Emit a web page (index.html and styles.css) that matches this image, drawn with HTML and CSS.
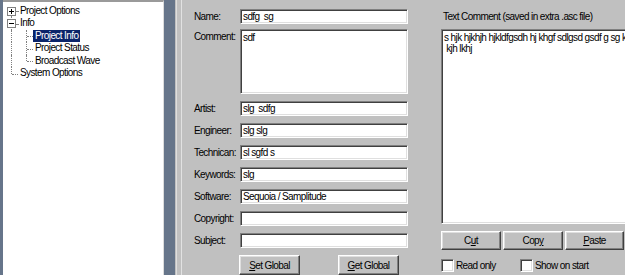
FILE: index.html
```html
<!DOCTYPE html>
<html>
<head>
<meta charset="utf-8">
<title>Project Info</title>
<link rel="stylesheet" href="styles.css">
</head>
<body>
<div class="app">
  <div class="edge"></div>
  <div class="tree">
    <div class="row"><span class="c bx down"><span class="box plus"></span></span><span class="lbl">Project Options</span></div>
    <div class="row"><span class="c bx both"><span class="box minus"></span></span><span class="lbl">Info</span></div>
    <div class="row"><span class="c v"></span><span class="c t"></span><span class="lbl sel">Project Info</span></div>
    <div class="row"><span class="c v"></span><span class="c t"></span><span class="lbl">Project Status</span></div>
    <div class="row"><span class="c v"></span><span class="c l"></span><span class="lbl">Broadcast Wave</span></div>
    <div class="row"><span class="c l"></span><span class="lbl">System Options</span></div>
  </div>
  <div class="splitter"></div>
  <div class="main">
    <div class="main-inner">
      <div class="content">
        <div class="form">
          <div class="frow"><span class="flabel">Name:</span><div class="field">sdfg&nbsp; sg</div></div>
          <div class="frow top comment"><span class="flabel">Comment:</span><div class="field area">sdf</div></div>
          <div class="frow"><span class="flabel">Artist:</span><div class="field">slg&nbsp; sdfg</div></div>
          <div class="frow"><span class="flabel">Engineer:</span><div class="field">slg slg</div></div>
          <div class="frow"><span class="flabel">Technican:</span><div class="field">sl sgfd s</div></div>
          <div class="frow"><span class="flabel">Keywords:</span><div class="field">slg</div></div>
          <div class="frow"><span class="flabel">Software:</span><div class="field">Sequoia / Samplitude</div></div>
          <div class="frow"><span class="flabel">Copyright:</span><div class="field"></div></div>
          <div class="frow"><span class="flabel">Subject:</span><div class="field"></div></div>
          <div class="frow btns"><div class="btn gbtn"><u>S</u>et Global</div><div class="btn gbtn"><u>G</u>et Global</div></div>
        </div>
        <div class="side">
          <div class="tc-label">Text Comment (saved in extra .asc file)</div>
          <div class="field tarea">s hjk hjkhjh hjkldfgsdh hj khgf sdlgsd gsdf g sg kjh
 kjh lkhj</div>
          <div class="cbtns">
            <div class="btn">C<u>u</u>t</div>
            <div class="btn">Cop<u>y</u></div>
            <div class="btn"><u>P</u>aste</div>
          </div>
          <div class="checks">
            <div class="chk"><span class="cb"></span>Read only</div>
            <div class="chk"><span class="cb"></span>Show on start</div>
          </div>
        </div>
      </div>
    </div>
  </div>
</div>
</body>
</html>
```

FILE: styles.css
```css
* { box-sizing: border-box; }
html, body { margin: 0; padding: 0; }
body {
  width: 625px;
  height: 275px;
  overflow: hidden;
  background: #66758a;
  font-family: "Liberation Sans", Arial, sans-serif;
  font-size: 10px;
  letter-spacing: -0.6px;
  color: #000;
}
.app { display: flex; height: 275px; }
.edge { width: 3px; flex: none; }

/* tree */
.tree {
  width: 161px;
  flex: none;
  background: #fff;
  border-top: 2px solid #9a9a9a;
  border-right: 1px solid #dcdcdc;
  padding-top: 2.8px;
}
.row { display: flex; height: 12.5px; white-space: nowrap; }
.c { width: 15px; flex: none; position: relative; display: flex; align-items: center; }
.c::before, .c::after { content: ""; position: absolute; }
.v::before, .t::before, .bx.both::before { left: 8px; top: 0; bottom: 0; border-left: 1px dotted #808080; }
.l::before { left: 8px; top: 0; height: 50%; border-left: 1px dotted #808080; }
.bx.down::before { left: 8px; top: 50%; bottom: 0; border-left: 1px dotted #808080; }
.t::after, .l::after { left: 9px; right: 0; top: 50%; border-top: 1px dotted #808080; }
.bx::after { left: 13px; right: 0; top: 50%; border-top: 1px dotted #808080; }
.v::after { display: none; }
.box {
  position: relative;
  z-index: 1;
  margin-left: 4px;
  width: 9px;
  height: 9px;
  border: 1px solid #808080;
  background: #fff;
}
.box.plus {
  background:
    linear-gradient(#000, #000) center / 5px 1px no-repeat,
    linear-gradient(#000, #000) center / 1px 5px no-repeat,
    #fff;
}
.box.minus {
  background: linear-gradient(#000, #000) center / 5px 1px no-repeat, #fff;
}
.lbl { padding: 0 2px; line-height: 12.5px; }
.lbl.sel { background: #0a246a; color: #fff; }

/* splitter + main panel */
.splitter { width: 11px; flex: none; }
.main { flex: 1; background: #c0c0c0; display: flex; padding-left: 1px; }
.main-inner { flex: 1; display: flex; border-left: 1px solid #dedede; padding-left: 4px; }
.content { flex: 1; display: flex; gap: 33px; border-left: 1px solid #e2e2e2; padding: 9px 0 0 12px; }

/* form */
.form { width: 214px; flex: none; display: flex; flex-direction: column; }
.frow { display: flex; align-items: center; }
.frow + .frow { margin-top: 7px; }
.frow.comment { margin-top: 5px; align-items: flex-start; }
.frow.comment .flabel { line-height: 15px; }
.flabel { width: 46px; flex: none; white-space: nowrap; }
.field {
  width: 168px;
  height: 15px;
  background: #fff;
  border: 1px solid;
  border-color: #808080 #fff #fff #808080;
  box-shadow: inset 1px 1px 0 #404040, inset -1px -1px 0 #dfdfdf;
  padding-left: 2px;
  line-height: 13px;
  white-space: pre;
  overflow: hidden;
}
.field.area { height: 65px; line-height: 11px; padding-top: 2px; }
.btns { padding-left: 45px; gap: 38px; }
.btn {
  height: 20px;
  display: flex;
  align-items: center;
  justify-content: center;
  background: #c0c0c0;
  border: 1px solid;
  border-color: #fff #404040 #404040 #fff;
  box-shadow: inset -1px -1px 0 #808080, inset 1px 1px 0 #dfdfdf;
  white-space: nowrap;
}
.gbtn { width: 61px; }

/* right side */
.side { width: 190px; flex: none; display: flex; flex-direction: column; }
.tc-label { padding-left: 2px; line-height: 16px; margin-bottom: 4px; white-space: nowrap; }
.field.tarea { width: 190px; height: 195px; line-height: 11px; padding-top: 2px; border-right: none; }
.cbtns { display: grid; grid-template-columns: 60px 60px 59px; gap: 2px; margin-top: 7px; }
.cbtns .btn { height: 19px; }
.checks { display: grid; grid-template-columns: 79px auto; margin-top: 9px; }
.chk { display: flex; align-items: center; white-space: nowrap; }
.cb {
  width: 13px;
  height: 13px;
  flex: none;
  margin-right: 2px;
  background: #fff;
  border: 1px solid;
  border-color: #808080 #fff #fff #808080;
  box-shadow: inset 1px 1px 0 #404040, inset -1px -1px 0 #dfdfdf;
}
```
